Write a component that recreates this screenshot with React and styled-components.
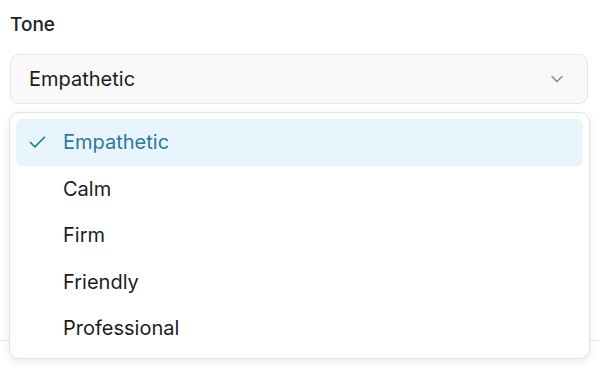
import { useState } from "react";
import styled, { createGlobalStyle } from "styled-components";
import { Check, ChevronDown } from "lucide-react";

const tones = ["Empathetic", "Calm", "Firm", "Friendly", "Professional"];

const App = () => {
  const [tone, setTone] = useState("Empathetic");

  return (
    <>
      <GlobalStyle />
      <Page>
        <Label>Tone</Label>
        <Field>
          <Trigger type="button">
            <span>{tone}</span>
            <ChevronDown size={20} strokeWidth={1.8} color="#8a8a8a" />
          </Trigger>
          <Menu>
            {tones.map((t) => (
              <Item key={t} $active={t === tone} onClick={() => setTone(t)}>
                <CheckSlot>
                  {t === tone && <Check size={21} strokeWidth={2} />}
                </CheckSlot>
                {t}
              </Item>
            ))}
          </Menu>
        </Field>
        <Below />
      </Page>
    </>
  );
};

const GlobalStyle = createGlobalStyle`
  body {
    margin: 0;
    background: #fff;
    font-family: Inter, "Noto Sans", sans-serif;
  }
`;

const Page = styled.div`
  width: 600px;
  height: 368px;
  overflow: hidden;
  box-sizing: border-box;
  padding: 13px 0 0;
`;

const Label = styled.div`
  padding-left: 10px;
  font-size: 19px;
  font-weight: 500;
  line-height: 24px;
  color: #222;
  margin-bottom: 17px;
`;

const Field = styled.div`
  position: relative;
  padding: 0 12px 0 10px;
`;

const Trigger = styled.button`
  display: flex;
  align-items: center;
  justify-content: space-between;
  width: 100%;
  height: 50px;
  box-sizing: border-box;
  padding: 0 20px 0 18px;
  background: #f9f9f9;
  border: 1px solid #e6e6e6;
  border-radius: 9px;
  font-family: inherit;
  font-size: 20px;
  color: #1c1c1c;
  cursor: pointer;
`;

const Menu = styled.ul`
  position: absolute;
  top: 58px;
  left: 9px;
  right: 10px;
  margin: 0;
  padding: 6px;
  list-style: none;
  background: #fff;
  border: 1px solid #e4e4e4;
  border-radius: 10px;
  box-shadow: 0 3px 8px rgba(0, 0, 0, 0.08);
  z-index: 2;
`;

const Item = styled.li`
  display: flex;
  align-items: center;
  height: 46.5px;
  padding-left: 11px;
  border-radius: 6px;
  font-size: 20px;
  cursor: pointer;
  color: ${(p) => (p.$active ? "#2a7aa3" : "#1c1c1c")};
  background: ${(p) => (p.$active ? "#e9f5fc" : "transparent")};
`;

const CheckSlot = styled.span`
  display: flex;
  align-items: center;
  width: 36px;
`;

const Below = styled.div`
  margin-top: 236px;
  border-bottom: 1px solid #e6e6e6;
`;

export default App;
